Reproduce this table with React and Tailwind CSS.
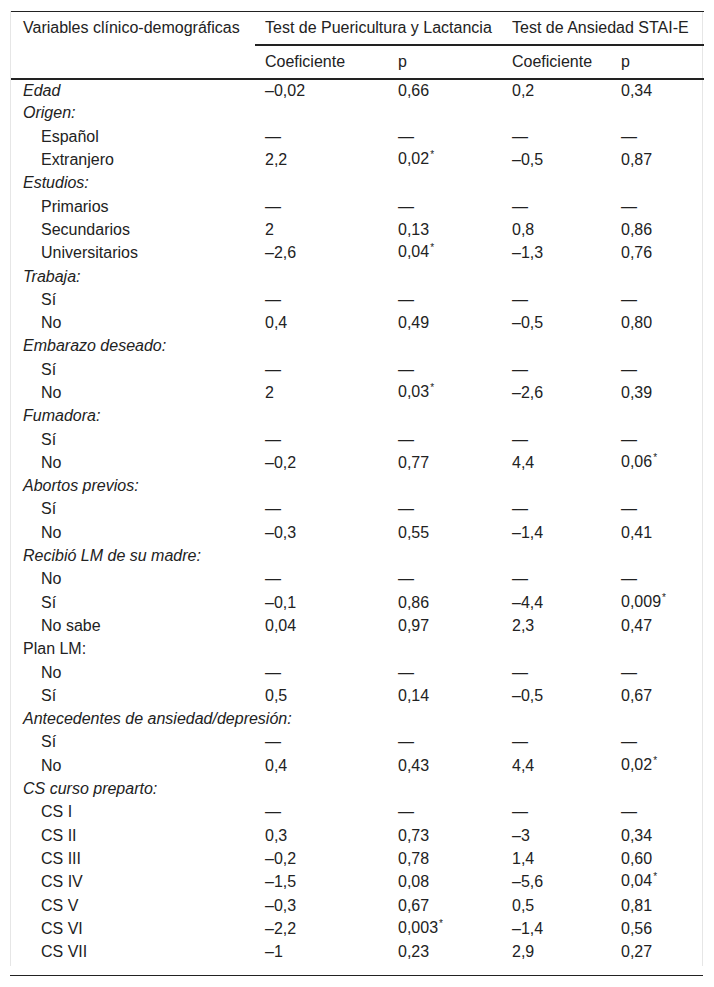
const D = "—";

// [label, kind, c1, p1, c2, p2]  kind: "h" = italic heading, "p" = plain heading, "s" = sub row
const rows = [
    ["Edad", "h", "–0,02", "0,66", "0,2", "0,34"],
    ["Origen:", "h"],
    ["Español", "s", D, D, D, D],
    ["Extranjero", "s", "2,2", "0,02*", "–0,5", "0,87"],
    ["Estudios:", "h"],
    ["Primarios", "s", D, D, D, D],
    ["Secundarios", "s", "2", "0,13", "0,8", "0,86"],
    ["Universitarios", "s", "–2,6", "0,04*", "–1,3", "0,76"],
    ["Trabaja:", "h"],
    ["Sí", "s", D, D, D, D],
    ["No", "s", "0,4", "0,49", "–0,5", "0,80"],
    ["Embarazo deseado:", "h"],
    ["Sí", "s", D, D, D, D],
    ["No", "s", "2", "0,03*", "–2,6", "0,39"],
    ["Fumadora:", "h"],
    ["Sí", "s", D, D, D, D],
    ["No", "s", "–0,2", "0,77", "4,4", "0,06*"],
    ["Abortos previos:", "h"],
    ["Sí", "s", D, D, D, D],
    ["No", "s", "–0,3", "0,55", "–1,4", "0,41"],
    ["Recibió LM de su madre:", "h"],
    ["No", "s", D, D, D, D],
    ["Sí", "s", "–0,1", "0,86", "–4,4", "0,009*"],
    ["No sabe", "s", "0,04", "0,97", "2,3", "0,47"],
    ["Plan LM:", "p"],
    ["No", "s", D, D, D, D],
    ["Sí", "s", "0,5", "0,14", "–0,5", "0,67"],
    ["Antecedentes de ansiedad/depresión:", "h"],
    ["Sí", "s", D, D, D, D],
    ["No", "s", "0,4", "0,43", "4,4", "0,02*"],
    ["CS curso preparto:", "h"],
    ["CS I", "s", D, D, D, D],
    ["CS II", "s", "0,3", "0,73", "–3", "0,34"],
    ["CS III", "s", "–0,2", "0,78", "1,4", "0,60"],
    ["CS IV", "s", "–1,5", "0,08", "–5,6", "0,04*"],
    ["CS V", "s", "–0,3", "0,67", "0,5", "0,81"],
    ["CS VI", "s", "–2,2", "0,003*", "–1,4", "0,56"],
    ["CS VII", "s", "–1", "0,23", "2,9", "0,27"],
];

const Val = ({ v }) => {
    if (!v) return null;
    if (v.endsWith("*")) {
        return (
            <>
                {v.slice(0, -1)}
                <span className="text-[10px] relative -top-[6px] ml-[1px]">*</span>
            </>
        );
    }
    return v;
};

export default function App() {
    return (
        <div
            className="bg-white w-[714px] h-[987px] pt-[11px] pl-[10px] text-[16px] leading-[18px] text-[#222]"
            style={{ fontFamily: '"Liberation Sans", Arial, sans-serif' }}
        >
            <div className="w-[693px]">
                <div className="border-x border-[#e6e6e6] pb-[2px]">
                    <table className="w-full border-collapse table-fixed">
                        <colgroup>
                            <col className="w-[244px]" />
                            <col className="w-[133px]" />
                            <col className="w-[114px]" />
                            <col className="w-[109px]" />
                            <col className="w-[93px]" />
                        </colgroup>
                        <thead>
                            <tr className="h-[33px] border-t border-[#222]">
                                <th className="font-normal text-left pl-[12px] align-middle whitespace-nowrap">
                                    Variables clínico-demográficas
                                </th>
                                <th colSpan={2} className="font-normal text-left pl-[10px] border-b-2 border-[#222] whitespace-nowrap">
                                    Test de Puericultura y Lactancia
                                </th>
                                <th colSpan={2} className="font-normal text-left pl-[10px] border-b-2 border-[#222] whitespace-nowrap">
                                    Test de Ansiedad STAI-E
                                </th>
                            </tr>
                            <tr className="h-[34px] border-b-2 border-[#222]">
                                <th></th>
                                <th className="font-normal text-left pl-[10px]">Coeficiente</th>
                                <th className="font-normal text-left pl-[10px]">p</th>
                                <th className="font-normal text-left pl-[10px]">Coeficiente</th>
                                <th className="font-normal text-left pl-[10px]">p</th>
                            </tr>
                        </thead>
                        <tbody>
                            {rows.map((r, i) => (
                                <tr key={i} className="h-[23.3px]">
                                    <td
                                        className={
                                            r[1] === "s"
                                                ? "pl-[30px] whitespace-nowrap"
                                                : r[1] === "h"
                                                ? "pl-[12px] italic whitespace-nowrap"
                                                : "pl-[12px] whitespace-nowrap"
                                        }
                                    >
                                        {r[0]}
                                    </td>
                                    <td className="pl-[10px]"><Val v={r[2]} /></td>
                                    <td className="pl-[10px]"><Val v={r[3]} /></td>
                                    <td className="pl-[10px]"><Val v={r[4]} /></td>
                                    <td className="pl-[10px]"><Val v={r[5]} /></td>
                                </tr>
                            ))}
                        </tbody>
                    </table>
                </div>
                <div className="mt-[9px] border-t border-[#222]"></div>
            </div>
        </div>
    );
}
